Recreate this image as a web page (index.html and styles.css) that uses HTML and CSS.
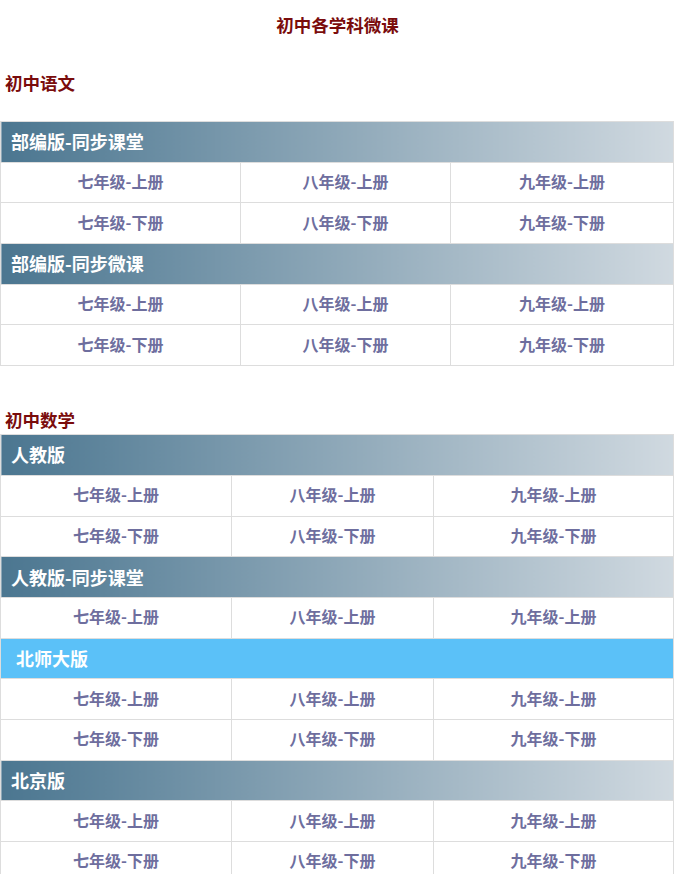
FILE: index.html
```
<!DOCTYPE html>
<html>
	<head>
		<meta http-equiv="Content-Type" content="text/html; charset=UTF-8">
		<title>初中各学科微课</title>
		<link rel="stylesheet" href="styles.css">
	</head>
	<body>
		<h2 class="page-title">初中各学科微课</h2>

		<h3 class="subject-title subject-first">初中语文</h3>
		<table class="course-table">
			<colgroup><col class="col-a1"><col class="col-a2"><col></colgroup>
			<tr><th colspan="3" class="course-head">部编版-同步课堂</th></tr>
			<tr><td>七年级-上册</td><td>八年级-上册</td><td>九年级-上册</td></tr>
			<tr><td>七年级-下册</td><td>八年级-下册</td><td>九年级-下册</td></tr>
			<tr><th colspan="3" class="course-head">部编版-同步微课</th></tr>
			<tr><td>七年级-上册</td><td>八年级-上册</td><td>九年级-上册</td></tr>
			<tr><td>七年级-下册</td><td>八年级-下册</td><td>九年级-下册</td></tr>
		</table>

		<h3 class="subject-title subject-next">初中数学</h3>
		<table class="course-table">
			<colgroup><col class="col-b1"><col class="col-b2"><col></colgroup>
			<tr><th colspan="3" class="course-head">人教版</th></tr>
			<tr><td>七年级-上册</td><td>八年级-上册</td><td>九年级-上册</td></tr>
			<tr><td>七年级-下册</td><td>八年级-下册</td><td>九年级-下册</td></tr>
			<tr><th colspan="3" class="course-head">人教版-同步课堂</th></tr>
			<tr><td>七年级-上册</td><td>八年级-上册</td><td>九年级-上册</td></tr>
			<tr><th colspan="3" class="course-head course-head-blue">北师大版</th></tr>
			<tr><td>七年级-上册</td><td>八年级-上册</td><td>九年级-上册</td></tr>
			<tr><td>七年级-下册</td><td>八年级-下册</td><td>九年级-下册</td></tr>
			<tr><th colspan="3" class="course-head">北京版</th></tr>
			<tr><td>七年级-上册</td><td>八年级-上册</td><td>九年级-上册</td></tr>
			<tr><td>七年级-下册</td><td>八年级-下册</td><td>九年级-下册</td></tr>
		</table>
	</body>
</html>
```

FILE: styles.css
```
body{margin: 0px; font-family: "Noto Sans CJK SC", "Noto Sans", sans-serif; background: #fff;}
.page-title{margin: 0px; padding-top: 13px; font-size: 17.5px; line-height: 24px; text-align: center; color: #7a0c0c;}
.subject-title{margin: 0px; padding-left: 5px; font-size: 17.5px; line-height: 24px; color: #7a0c0c;}
.subject-first{margin-top: 34px; margin-bottom: 26px;}
.subject-next{margin-top: 42px; margin-bottom: 2px;}
.course-table{width: 674px; border-collapse: collapse; table-layout: fixed;}
.col-a1{width: 240px;}
.col-a2{width: 210px;}
.col-b1{width: 231px;}
.col-b2{width: 202px;}
.course-table td, .course-table th{border: 1px solid #ddd; height: 40.7px; padding: 0px; box-sizing: border-box;}
.course-table td{text-align: center; padding-bottom: 3px; font-size: 16px; font-weight: bold; color: #6e6e9e;}
.course-head{text-align: left; padding: 0px 0px 1px 10px !important; font-size: 18px; color: #fff; background: linear-gradient(to right, #4b7690, #d0d9e0);}
.course-head-blue{padding-left: 15px !important; background: #5bc1f8;}
```
